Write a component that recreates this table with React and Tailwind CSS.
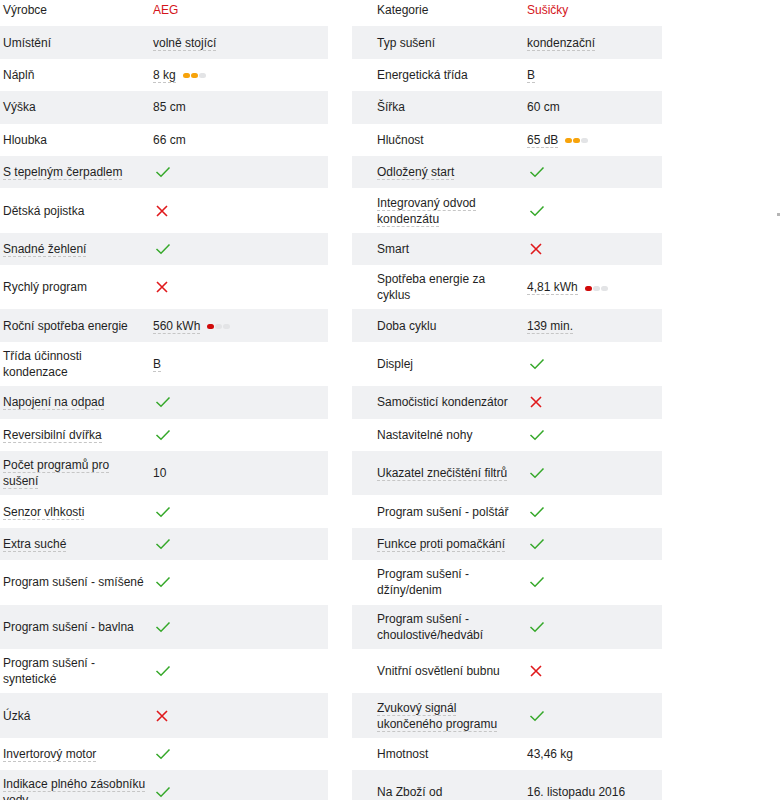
import React from "react";

const C = { check: true };
const X = { cross: true };

const rows = [
  [{ l: "Výrobce", v: { t: "AEG", red: true } }, { l: "Kategorie", v: { t: "Sušičky", red: true } }],
  [{ l: "Umístění", v: { t: "volně stojící", u: true } }, { l: "Typ sušení", v: { t: "kondenzační", u: true } }],
  [{ l: "Náplň", v: { t: "8 kg", u: true, dots: 2, c: "o" } }, { l: "Energetická třída", v: { t: "B", u: true } }],
  [{ l: "Výška", v: { t: "85 cm" } }, { l: "Šířka", v: { t: "60 cm" } }],
  [{ l: "Hloubka", v: { t: "66 cm" } }, { l: "Hlučnost", v: { t: "65 dB", u: true, dots: 2, c: "o" } }],
  [{ l: "S tepelným čerpadlem", lu: true, v: C }, { l: "Odložený start", lu: true, v: C }],
  [{ l: "Dětská pojistka", v: X }, { l: "Integrovaný odvod kondenzátu", lu: true, v: C }],
  [{ l: "Snadné žehlení", lu: true, v: C }, { l: "Smart", v: X }],
  [{ l: "Rychlý program", v: X }, { l: "Spotřeba energie za cyklus", v: { t: "4,81 kWh", u: true, dots: 1, c: "r" } }],
  [{ l: "Roční spotřeba energie", v: { t: "560 kWh", u: true, dots: 1, c: "r" } }, { l: "Doba cyklu", v: { t: "139 min.", u: true } }],
  [{ l: "Třída účinnosti kondenzace", v: { t: "B", u: true } }, { l: "Displej", v: C }],
  [{ l: "Napojení na odpad", lu: true, v: C }, { l: "Samočisticí kondenzátor", v: X }],
  [{ l: "Reversibilní dvířka", lu: true, v: C }, { l: "Nastavitelné nohy", v: C }],
  [{ l: ["Počet programů pro", "sušení"], lu: true, v: { t: "10" } }, { l: "Ukazatel znečištění filtrů", lu: true, v: C }],
  [{ l: "Senzor vlhkosti", lu: true, v: C }, { l: "Program sušení - polštář", v: C }],
  [{ l: "Extra suché", lu: true, v: C }, { l: "Funkce proti pomačkání", lu: true, v: C }],
  [{ l: "Program sušení - smíšené", v: C }, { l: "Program sušení - džíny/denim", v: C }],
  [{ l: "Program sušení - bavlna", v: C }, { l: "Program sušení - choulostivé/hedvábí", v: C }],
  [{ l: "Program sušení - syntetické", v: C }, { l: "Vnitřní osvětlení bubnu", v: X }],
  [{ l: "Úzká", v: X }, { l: "Zvukový signál ukončeného programu", lu: true, v: C }],
  [{ l: "Invertorový motor", lu: true, v: C }, { l: "Hmotnost", v: { t: "43,46 kg" } }],
  [{ l: "Indikace plného zásobníku vody", lu: true, v: C }, { l: "Na Zboží od", v: { t: "16. listopadu 2016" } }],
];

function Check() {
  return (
    <svg width="16" height="12" viewBox="0 0 16 12" className="ml-[2px] block">
      <path d="M1.5 6 L6 10.2 L14.5 1.5" fill="none" stroke="#35a829" strokeWidth="1.5" />
    </svg>
  );
}

function Cross() {
  return (
    <svg width="12" height="12" viewBox="0 0 12 12" className="ml-[3px] block">
      <path d="M1 1 L11 11 M11 1 L1 11" fill="none" stroke="#e0191c" strokeWidth="1.6" />
    </svg>
  );
}

function Dots({ n, c }) {
  const on = c === "o" ? "bg-[#f7a30b]" : "bg-[#d00a0a]";
  return (
    <span className="ml-[7px] inline-flex gap-[1px] align-middle">
      {[0, 1, 2].map((i) => (
        <span key={i} className={`inline-block h-[5px] w-[7px] rounded-full ${i < n ? on : "bg-[#e3e4e6]"}`} />
      ))}
    </span>
  );
}

function U({ children }) {
  return <span className="border-b border-dashed border-[#c6c6c6]">{children}</span>;
}

function Label({ l, lu }) {
  const content = Array.isArray(l) ? (
    <>
      {l[0]}
      <br />
      {l[1]}
    </>
  ) : (
    l
  );
  return lu ? <U>{content}</U> : content;
}

function Value({ v }) {
  if (v.check) return <Check />;
  if (v.cross) return <Cross />;
  const txt = v.u ? <U>{v.t}</U> : v.t;
  return (
    <span className={v.red ? "text-[#d4151b]" : ""}>
      {txt}
      {v.dots ? <Dots n={v.dots} c={v.c} /> : null}
    </span>
  );
}

function Half({ cell, bg, left }) {
  return (
    <div className={`flex items-center ${bg} ${left ? "w-[328px]" : "w-[310px]"}`}>
      <div className={left ? "w-[153px] shrink-0 pl-[3px] pr-[5px] py-[6.2px]" : "w-[175px] shrink-0 pl-[25px] pr-[12px] py-[6.2px]"}>
        <Label l={cell.l} lu={cell.lu} />
      </div>
      <div className="flex flex-1 items-center">
        <Value v={cell.v} />
      </div>
    </div>
  );
}

export default function App() {
  return (
    <div className="relative h-[800px] w-[782px] overflow-hidden bg-white font-['Liberation_Sans',Arial,sans-serif] text-[12px] leading-[16px] text-[#1f1f24]">
      <div className="-mt-[6px] flex flex-col">
        {rows.map((r, i) => {
          const bg = i % 2 === 1 ? "bg-[#f0f1f3]" : "bg-white";
          return (
            <div key={i} className="flex min-h-[32.4px]">
              <Half cell={r[0]} bg={bg} left />
              <div className="w-[24px] shrink-0" />
              <Half cell={r[1]} bg={bg} />
            </div>
          );
        })}
      </div>
      <div className="absolute left-[777px] top-[213px] h-[3px] w-[3px] bg-[#b5b5b5]" />
    </div>
  );
}
